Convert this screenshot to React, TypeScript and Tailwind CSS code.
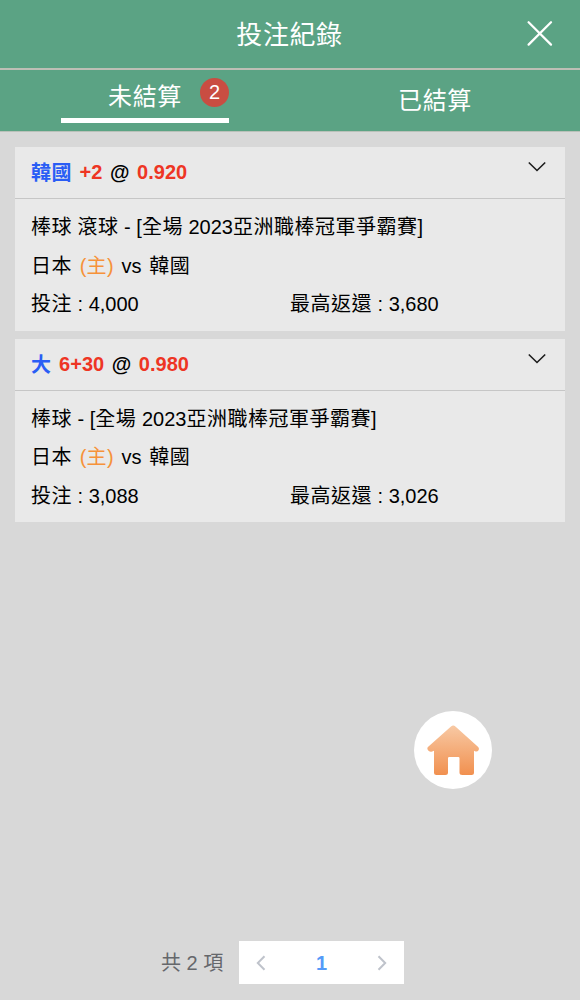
import React from "react";

type Bet = {
  pick: string;
  line: string;
  odds: string;
  title: string;
  home: string;
  away: string;
  stake: string;
  maxReturn: string;
};

const bets: Bet[] = [
  {
    pick: "韓國",
    line: "+2",
    odds: "0.920",
    title: "棒球 滾球 - [全場 2023亞洲職棒冠軍爭霸賽]",
    home: "日本",
    away: "韓國",
    stake: "4,000",
    maxReturn: "3,680",
  },
  {
    pick: "大",
    line: "6+30",
    odds: "0.980",
    title: "棒球 - [全場 2023亞洲職棒冠軍爭霸賽]",
    home: "日本",
    away: "韓國",
    stake: "3,088",
    maxReturn: "3,026",
  },
];

/** Gives the Han runs of a mixed string slightly wider tracking than the Latin ones. */
function Mixed({ children }: { children: string }) {
  return (
    <>
      {children.split(/([\u4e00-\u9fff]+)/).map((run, i) =>
        i % 2 ? (
          <span key={i} className="tracking-[0.5px]">
            {run}
          </span>
        ) : (
          run
        ),
      )}
    </>
  );
}

function BetCard({ bet }: { bet: Bet }) {
  return (
    <article className="bg-[#e9e9e9] text-xl text-black">
      <header className="flex h-[52px] items-start justify-between border-b border-[#c6c6c6] pr-[19px] pl-4 font-bold">
        <div className="flex gap-[7.6px] pt-[3px] leading-[44px]">
          <span className="pt-px text-[#2a5df5]">
            <Mixed>{bet.pick}</Mixed>
          </span>
          <span className="text-[#ee3524]">{bet.line}</span>
          <span>@</span>
          <span className="text-[#ee3524]">{bet.odds}</span>
        </div>
        <svg className="mt-[14px] h-3 w-[18px]" viewBox="0 0 18 12" fill="none" stroke="#1c1c1c" strokeWidth="1.6">
          <path d="M0.8 1.5 9 9.5 17.2 1.5" />
        </svg>
      </header>
      <div className="pt-[9px] pb-[7px] pl-4 leading-[38.5px] whitespace-nowrap">
        <p>
          <Mixed>{bet.title}</Mixed>
        </p>
        <p className="flex gap-[7.8px]">
          <Mixed>{bet.home}</Mixed>
          <span className="text-[#f6923a]">
            <Mixed>(主)</Mixed>
          </span>
          <span>vs</span>
          <Mixed>{bet.away}</Mixed>
        </p>
        <div className="flex">
          <p className="w-[259px]">
            <Mixed>{`投注 : ${bet.stake}`}</Mixed>
          </p>
          <p>
            <Mixed>{`最高返還 : ${bet.maxReturn}`}</Mixed>
          </p>
        </div>
      </div>
    </article>
  );
}

export default function App() {
  return (
    <div className="relative flex h-[1000px] w-[580px] flex-col overflow-hidden bg-[#d8d8d8] font-['Liberation_Sans','Noto_Sans_CJK_TC',sans-serif]">
      <header className="grid h-[70px] grid-cols-[80px_1fr_80px] items-center border-b-2 border-[#bdbfb5] bg-[#5ba384] text-white">
        <h1 className="col-start-2 pt-[2px] pr-px text-center text-[26px] leading-10 tracking-[0.6px]">投注紀錄</h1>
        <button className="flex justify-center" aria-label="關閉">
          <svg className="h-[26px] w-[26px]" viewBox="0 0 26 26" fill="none" stroke="white" strokeWidth="2.2" strokeLinecap="round">
            <path d="M1.6 1.2 24 23.6M24 1.2 1.6 23.6" />
          </svg>
        </button>
      </header>

      <nav className="grid h-[62px] shrink-0 grid-cols-2 border-b border-[#b9c1b9] bg-[#5ba384] text-2xl tracking-[0.6px] text-white">
        <div className="relative mx-auto h-[53px] w-[168px] border-b-[5px] border-white text-center leading-[53px]">
          未結算
          <span className="absolute top-[7.5px] right-0 h-[29px] w-[29px] rounded-full bg-[#c94d42] text-xl leading-[29px] tracking-normal">
            2
          </span>
        </div>
        <div className="text-center leading-[62px]">已結算</div>
      </nav>

      <main className="flex flex-1 flex-col gap-2 px-[15px] pt-[15px]">
        {bets.map((bet) => (
          <BetCard key={bet.title} bet={bet} />
        ))}
      </main>

      <button
        aria-label="首頁"
        className="absolute top-[711px] left-[414px] flex h-[78px] w-[78px] items-center justify-center rounded-full bg-white"
      >
        <svg className="h-[78px] w-[78px]" viewBox="0 0 78 78">
          <defs>
            <linearGradient id="home" x1="0" y1="0" x2="0" y2="1">
              <stop offset="0" stopColor="#f8c9a4" />
              <stop offset="1" stopColor="#f1904f" />
            </linearGradient>
          </defs>
          <path
            fill="url(#home)"
            d="M37 15.4Q39.2 13.7 41.4 15.4L64.2 36Q65.5 37.6 64.5 39.2Q63.3 41 61 40.2L60 39.7V61.5Q60 64 57.5 64H48.2Q45.5 64 45.5 61.5V47.2Q45.5 46 44.3 46H35.2Q34 46 34 47.2V61.5Q34 64 31.4 64H22.5Q20 64 20 61.5V39.7L18.2 40.4Q15.3 41.2 14 39.2Q12.6 37.4 14.2 35.8Z"
          />
        </svg>
      </button>

      <footer className="mb-4 flex h-[43px] shrink-0 items-center pl-[161px] text-xl text-[#65676b]">
        <span className="w-[78px] whitespace-nowrap">共 2 項</span>
        <div className="flex h-[43px] w-[165px] items-center justify-between bg-white px-[17px]">
          <svg className="h-4 w-[10px]" viewBox="0 0 10 16" fill="none" stroke="#bfc3cb" strokeWidth="2">
            <path d="M8.5 1.2 1.8 8 8.5 14.8" />
          </svg>
          <span className="font-bold text-[#559af8]">1</span>
          <svg className="h-4 w-[10px]" viewBox="0 0 10 16" fill="none" stroke="#bfc3cb" strokeWidth="2">
            <path d="M1.5 1.2 8.2 8 1.5 14.8" />
          </svg>
        </div>
      </footer>
    </div>
  );
}
